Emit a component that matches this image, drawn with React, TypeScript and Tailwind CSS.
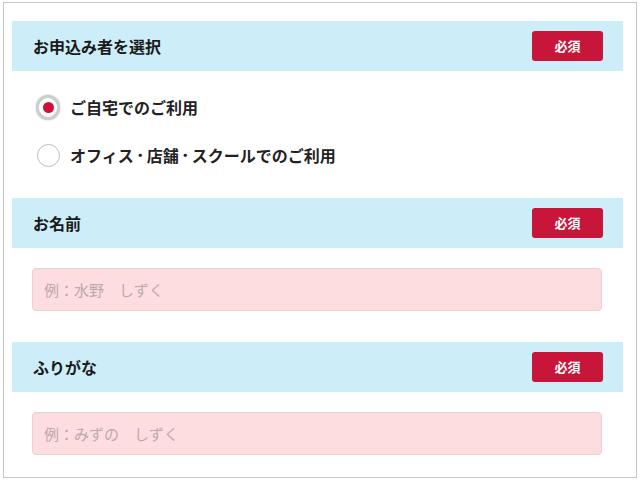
import { useState } from "react";

const jp = { fontFamily: '"Noto Sans CJK JP", "Noto Sans", sans-serif' };

function SectionHeader({ title }: { title: string }) {
  return (
    <div className="flex h-[50px] items-center justify-between bg-[#cdeef9] pl-[21px] pr-[20px]">
      <span className="text-[16px] font-bold text-[#1a1a1a]">{title}</span>
      <span className="flex h-[30px] w-[71px] items-center justify-center rounded-[3px] bg-[#c8153a] text-[13px] font-bold text-white">
        必須
      </span>
    </div>
  );
}

function Radio({ checked }: { checked: boolean }) {
  if (checked) {
    return (
      <span className="flex h-[25px] w-[25px] items-center justify-center rounded-full border-[3px] border-[#cdcdcd] bg-white shadow-[0_0_2px_rgba(0,0,0,0.25)]">
        <span className="h-[11px] w-[11px] rounded-full bg-[#d01039]" />
      </span>
    );
  }
  return (
    <span className="h-[23px] w-[23px] rounded-full border-[1.5px] border-[#bcbcbc] bg-white" />
  );
}

function TextInput({ placeholder }: { placeholder: string }) {
  return (
    <input
      type="text"
      placeholder={placeholder}
      className="mx-[20px] block h-[43px] w-[570px] rounded-[4px] border border-[#ebcfd2] bg-[#fddde0] px-[11px] text-[15px] text-[#333] outline-none placeholder:text-[#bba9ac]"
      style={jp}
    />
  );
}

// the middle dots sit tighter than a full em in the original
function Label({ text }: { text: string }) {
  const parts = text.split("・");
  return (
    <span className="flex items-center">
      {parts.map((p, i) => (
        <span key={i} className="flex items-center">
          {i > 0 && <span className="text-[13px]">・</span>}
          <span>{p}</span>
        </span>
      ))}
    </span>
  );
}

export default function App() {
  const [applicant, setApplicant] = useState("home");

  const options = [
    { id: "home", label: "ご自宅でのご利用" },
    { id: "office", label: "オフィス・店舗・スクールでのご利用" },
  ];

  return (
    <div className="h-[481px] w-[640px] bg-white pl-[3px] pt-[2px]" style={jp}>
      <div className="h-[476px] w-[634px] border border-[#c6c6c6] pl-[8px] pr-[13px] pt-[18px]">
        <SectionHeader title="お申込み者を選択" />
        <div className="pb-[19px] pt-[12px]">
          {options.map((opt) => (
            <button
              key={opt.id}
              type="button"
              onClick={() => setApplicant(opt.id)}
              className="flex h-[48px] items-center pl-[24px]"
            >
              <span className="flex w-[24px] justify-center">
                <Radio checked={applicant === opt.id} />
              </span>
              <span className="ml-[10px] text-[16px] font-semibold text-[#222]">
                <Label text={opt.label} />
              </span>
            </button>
          ))}
        </div>

        <SectionHeader title="お名前" />
        <div className="pb-[31px] pt-[20px]">
          <TextInput placeholder="例：水野　しずく" />
        </div>

        <SectionHeader title="ふりがな" />
        <div className="pt-[20px]">
          <TextInput placeholder="例：みずの　しずく" />
        </div>
      </div>
    </div>
  );
}
